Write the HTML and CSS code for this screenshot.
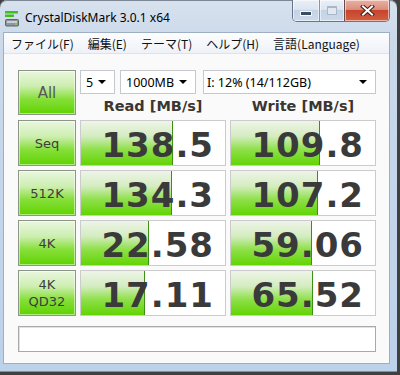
FILE: index.html
```html
<!DOCTYPE html>
<html lang="ja">
<head>
  <meta charset="UTF-8">
  <title>CrystalDiskMark 3.0.1 x64</title>
  <link rel="stylesheet" href="styles.css">
</head>
<body>
  <div class="window">
    <div class="titlebar">
      <svg class="app-icon" width="15" height="16" viewBox="0 0 15 16">
        <rect x="0" y="0" width="13" height="2.5" fill="#3fbf1e"/>
        <rect x="0" y="3.5" width="9" height="2.5" fill="#3fbf1e"/>
        <rect x="0.5" y="8.5" width="13" height="6.5" rx="1" fill="#8d969c" stroke="#5d656b"/>
        <rect x="2" y="10" width="10" height="2" fill="#c9d0d4"/>
        <rect x="10" y="12.5" width="2" height="1.2" fill="#7fe040"/>
      </svg>
      <span class="title">CrystalDiskMark 3.0.1 x64</span>
      <div class="caption-buttons">
        <div class="cap-btn cap-min"><span class="glyph-min"></span></div>
        <div class="cap-btn cap-max"><span class="glyph-max"></span></div>
        <div class="cap-btn cap-close">
          <svg width="15" height="11" viewBox="0 0 15 11">
            <path d="M3 1.5 L12 9.5 M12 1.5 L3 9.5" stroke="#4a1c14" stroke-width="4" stroke-linecap="square"/>
            <path d="M3 1.5 L12 9.5 M12 1.5 L3 9.5" stroke="#ffffff" stroke-width="2" stroke-linecap="square"/>
          </svg>
        </div>
      </div>
    </div>

    <div class="client">
      <ul class="menubar">
        <li>ファイル(F)</li>
        <li>編集(E)</li>
        <li>テーマ(T)</li>
        <li>ヘルプ(H)</li>
        <li>言語(Language)</li>
      </ul>

      <div class="bench">
        <div class="top">
          <div class="label-btn all">All</div>
          <div class="settings">
            <div class="combos">
              <div class="combo combo-count"><span>5</span><i class="arrow"></i></div>
              <div class="combo combo-size"><span>1000MB</span><i class="arrow"></i></div>
              <div class="combo combo-drive"><span>I: 12% (14/112GB)</span><i class="arrow"></i></div>
            </div>
            <div class="headers">
              <div>Read [MB/s]</div>
              <div>Write [MB/s]</div>
            </div>
          </div>
        </div>

        <div class="row">
          <div class="label-btn">Seq</div>
          <div class="value" style="--w: 91px">138.5</div>
          <div class="value" style="--w: 88px">109.8</div>
        </div>
        <div class="row">
          <div class="label-btn">512K</div>
          <div class="value" style="--w: 90px">134.3</div>
          <div class="value" style="--w: 86px">107.2</div>
        </div>
        <div class="row">
          <div class="label-btn">4K</div>
          <div class="value" style="--w: 67px">22.58</div>
          <div class="value" style="--w: 80px">59.06</div>
        </div>
        <div class="row">
          <div class="label-btn two-line">4K<br>QD32</div>
          <div class="value" style="--w: 63px">17.11</div>
          <div class="value" style="--w: 81px">65.52</div>
        </div>

        <div class="status"></div>
      </div>
    </div>
  </div>
</body>
</html>
```

FILE: styles.css
```css
body {
  margin: 0;
  background-color: #404040;
  font-family: "Noto Sans", sans-serif;
}

.window {
  box-sizing: border-box;
  width: 397px;
  height: 372px;
  padding: 0 7px 8px 3px;
  display: flex;
  flex-direction: column;
  background: linear-gradient(#d8e2ee, #cbd9ea 40px, #bcd2ea);
  border-radius: 7px 7px 0 0;
  box-shadow: inset 0 1px 0 #7b8795, inset 0 -1px 0 #7f90a4;
}

/* title bar */
.titlebar {
  height: 32px;
  display: flex;
  align-items: flex-start;
}

.app-icon {
  margin: 11px 0 0 2px;
}

.title {
  margin: 10px 0 0 5px;
  font-size: 12px;
  line-height: 16px;
  color: #000;
}

.caption-buttons {
  margin-left: auto;
  display: flex;
  height: 21px;
  border: 1px solid #66758a;
  border-top: none;
  border-radius: 0 0 5px 5px;
  overflow: hidden;
}

.cap-btn {
  display: flex;
  align-items: center;
  justify-content: center;
  box-shadow: inset 0 0 0 1px rgba(255, 255, 255, 0.55);
}

.cap-min {
  width: 26px;
  background: linear-gradient(#e9eff7, #dbe5f1 45%, #c3d2e5 50%, #ccdaeb);
  border-right: 1px solid #8494a8;
}

.cap-max {
  width: 24px;
  background: linear-gradient(#e9eff7, #dbe5f1 45%, #c3d2e5 50%, #ccdaeb);
  border-right: 1px solid #6b4a48;
}

.cap-close {
  flex: 1;
  width: 44px;
  background: linear-gradient(#eab0a3, #dc8d7c 45%, #c7442d 50%, #d25f40);
}

.glyph-min {
  width: 10px;
  height: 3px;
  margin-top: 6px;
  background-color: #3b4b60;
  border: 1px solid #f4f7fb;
}

.glyph-max {
  width: 8px;
  height: 6px;
  border: 1px solid #a9b7c9;
  border-top-width: 2px;
  background-color: #e1e8f2;
}

/* client area */
.client {
  flex: 1;
  display: flex;
  flex-direction: column;
  background-color: #fafafa;
  border: 1px solid #9eafc3;
}

.menubar {
  list-style: none;
  margin: 0;
  padding: 0 0 0 7px;
  height: 20px;
  display: flex;
  align-items: center;
  gap: 14px;
  font-family: "Noto Sans CJK JP", sans-serif;
  font-size: 12px;
  color: #111;
  background: linear-gradient(#fcfdfe, #eef2f8);
  border-bottom: 1px solid #dbe3ec;
}

.bench {
  padding: 16px 0 0 14px;
  display: flex;
  flex-direction: column;
  gap: 5px;
}

.top {
  display: grid;
  grid-template-columns: 58px 296px;
  column-gap: 4px;
  height: 45px;
}

.row {
  display: grid;
  grid-template-columns: 58px 146px 146px;
  column-gap: 4px;
  height: 45px;
}

.label-btn {
  box-sizing: border-box;
  display: flex;
  align-items: center;
  justify-content: center;
  text-align: center;
  border: 1px solid #8b9688;
  background: linear-gradient(#eaf6df, #cdeeb0 35%, #86df3a 65%, #5fd300);
  box-shadow: inset 0 0 0 1px rgba(255, 255, 255, 0.5);
  font-family: "DejaVu Sans", sans-serif;
  font-size: 13px;
  color: #3d3d3d;
}

.label-btn.all {
  font-size: 15px;
  color: #585858;
}

.label-btn.two-line {
  line-height: 17px;
}

.settings {
  display: flex;
  flex-direction: column;
}

.combos {
  display: flex;
  gap: 5px;
  height: 24px;
}

.combo {
  box-sizing: border-box;
  display: flex;
  align-items: center;
  justify-content: space-between;
  padding: 0 8px 0 5px;
  background-color: #fff;
  border: 1px solid #c5c8cc;
  font-size: 12.5px;
  color: #000;
}

.combo-count { width: 35px; }
.combo-size { width: 76px; }
.combo-drive { width: 173px; margin-left: 2px; padding-left: 3px; }

.arrow {
  width: 0;
  height: 0;
  border-left: 4px solid transparent;
  border-right: 4px solid transparent;
  border-top: 4px solid #000;
}

.headers {
  flex: 1;
  display: grid;
  grid-template-columns: 146px 146px;
  column-gap: 4px;
  align-items: end;
  text-align: center;
  font-family: "DejaVu Sans", sans-serif;
  font-weight: bold;
  font-size: 14.5px;
  line-height: 18px;
  color: #3a3631;
}

.value {
  box-sizing: border-box;
  border: 1px solid #cbcbcb;
  padding: 4px 11px 0 0;
  text-align: right;
  font-family: "DejaVu Sans", sans-serif;
  font-weight: bold;
  font-size: 34px;
  letter-spacing: 1px;
  line-height: 40px;
  color: #3a3a3a;
  background:
    linear-gradient(#3d8f16, #3d8f16) var(--w) 0 / 1px 100% no-repeat,
    linear-gradient(#eef4e8, #d4ecc0 35%, #8ee048 65%, #62d404) 0 0 / var(--w) 100% no-repeat,
    #fff;
}

.status {
  box-sizing: border-box;
  width: 358px;
  height: 26px;
  margin-top: 6px;
  background-color: #fff;
  border: 1px solid #a9a9a9;
  box-shadow: inset 1px 1px 0 #e2e2e2;
}
```
